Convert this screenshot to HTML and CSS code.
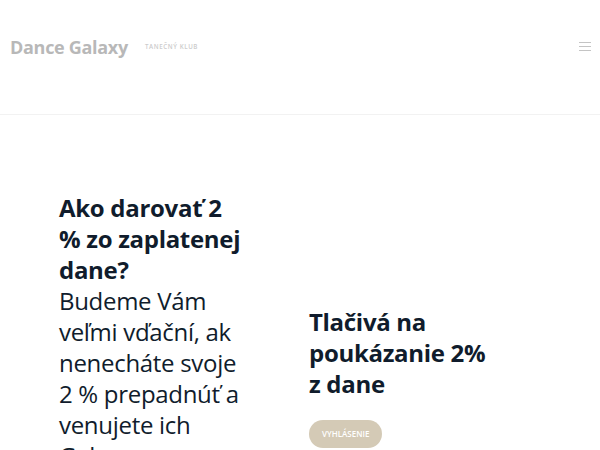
FILE: index.html
```html
<!DOCTYPE html>
<html lang="sk">
<head>
<meta charset="utf-8">
<title>Dance Galaxy</title>
<link rel="stylesheet" href="styles.css">
</head>
<body>
<header class="site-header">
  <div class="brand">
    <span class="logo">Dance Galaxy</span>
    <span class="tagline">TANEČNÝ KLUB</span>
  </div>
  <button class="menu-toggle" aria-label="Menu">
    <svg width="12" height="9" viewBox="0 0 12 9"><rect y="0" width="12" height="1" fill="#c4c4c4"/><rect y="4" width="12" height="1" fill="#c4c4c4"/><rect y="8" width="12" height="1" fill="#c4c4c4"/></svg>
  </button>
</header>
<main class="content">
  <section class="col col-left">
    <h2 class="heading">Ako darovať 2 % zo zaplatenej dane?</h2>
    <p class="lead">Budeme Vám veľmi vďační, ak nenecháte svoje 2 % prepadnúť a venujete ich Galaxy.</p>
  </section>
  <section class="col col-right">
    <h2 class="heading">Tlačivá na poukázanie 2% z dane</h2>
    <a class="btn" href="#">VYHLÁSENIE</a>
  </section>
</main>
</body>
</html>
```
FILE: styles.css
```css
html, body {
  margin: 0;
  padding: 0;
  background: #ffffff;
  font-family: "Open Sans", "Liberation Sans", sans-serif;
  overflow: hidden;
  height: 450px;
}
.site-header {
  height: 114px;
  border-bottom: 1px solid #f2f2f2;
  display: flex;
  align-items: center;
  justify-content: space-between;
  padding: 0 9px 0 10px;
  box-sizing: content-box;
}
.brand {
  display: flex;
  align-items: center;
  gap: 17px;
  margin-top: -21px;
}
.logo {
  font-size: 18px;
  font-weight: 700;
  color: #b8b8b8;
  letter-spacing: -0.3px;
}
.tagline {
  font-size: 6.2px;
  color: #cccccc;
  letter-spacing: 0.6px;
  font-weight: 600;
}
.menu-toggle {
  border: 0;
  background: none;
  padding: 0;
  margin-top: -22px;
  display: flex;
}
.content {
  display: flex;
  padding: 0 0 0 59px;
  height: 335px;
  overflow: hidden;
}
.col {
  width: 250px;
}
.col-left {
  padding-top: 77px;
  width: 184px;
  margin-right: 66px;
}
.col-right {
  padding-top: 191px;
}
.heading {
  margin: 0;
  font-size: 24px;
  line-height: 31px;
  font-weight: 700;
  color: #101c2c;
  letter-spacing: -0.3px;
}
.col-right .heading {
  width: 190px;
}
.lead {
  margin: 0;
  font-size: 24px;
  line-height: 31px;
  font-weight: 400;
  color: #101c2c;
  letter-spacing: -0.3px;
}
.btn {
  display: inline-block;
  margin-top: 21px;
  background: #d4cab6;
  color: #ffffff;
  text-decoration: none;
  font-size: 8px;
  font-weight: 600;
  padding: 0 13px;
  height: 28px;
  line-height: 28px;
  border-radius: 14px;
}
```
